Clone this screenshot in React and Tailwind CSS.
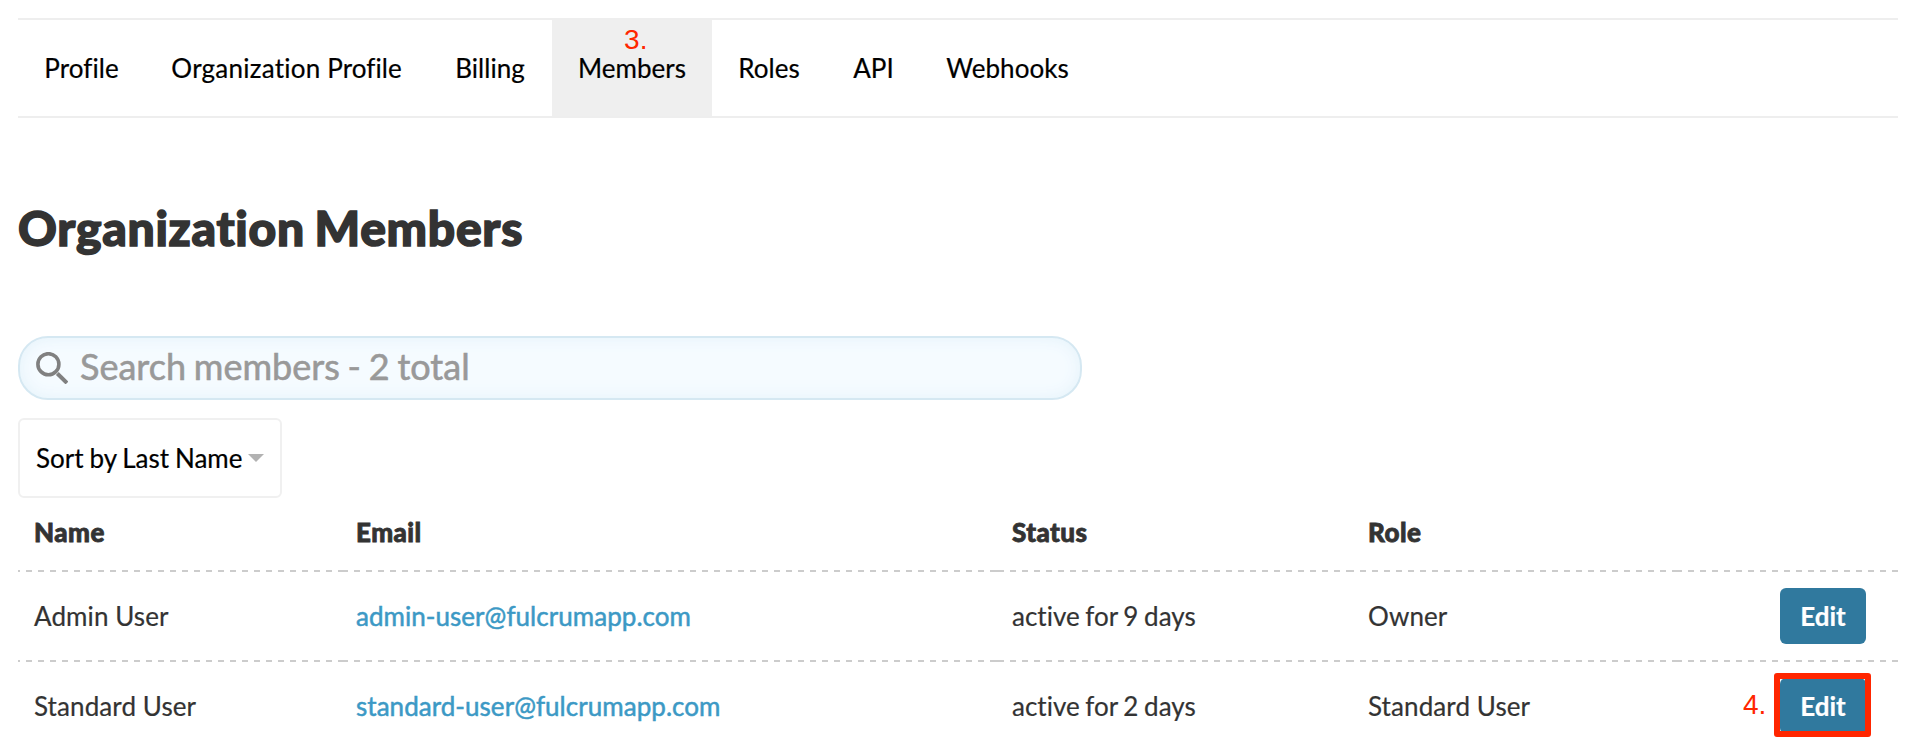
const tabs = [
  { label: "Profile", width: "w-[127px]" },
  { label: "Organization Profile", width: "w-[283px]" },
  { label: "Billing", width: "w-[124px]" },
  { label: "Members", width: "w-[160px]", active: true },
  { label: "Roles", width: "w-[114px]" },
  { label: "API", width: "w-[95px]" },
  { label: "Webhooks", width: "w-[173px]" },
];

const members = [
  { name: "Admin User", email: "admin-user@fulcrumapp.com", status: "active for 9 days", role: "Owner" },
  { name: "Standard User", email: "standard-user@fulcrumapp.com", status: "active for 2 days", role: "Standard User", step: "4." },
];

const COLS = "grid grid-cols-[322px_656px_356px_412px_86px]";
const DASH = "h-0.5 shrink-0 bg-[repeating-linear-gradient(90deg,#cccccc_0_6px,transparent_6px_12px)]";

function Rule() {
  return (
    <div className="flex h-0.5 overflow-hidden">
      <div className={`${DASH} -ml-1 w-[330px]`} />
      <div className={`${DASH} -ml-0.5 w-[654px]`} />
      <div className={`${DASH} w-[356px] border-l-2 border-[#cccccc]`} />
      <div className={`${DASH} -ml-1 w-[330px]`} />
      <div className={`${DASH} -ml-0.5 w-[222px]`} />
    </div>
  );
}

function EditButton({ step }) {
  return (
    <div className="relative">
      <button className="block h-14 w-[86px] rounded-md bg-[#30799e] text-[26px] leading-[56px] font-bold text-white">Edit</button>
      {step && (
        <>
          <span className="absolute -left-[37px] top-[11px] font-['Liberation_Sans',sans-serif] text-[28px] leading-8 text-[#ff2600] [-webkit-text-stroke:0px]">{step}</span>
          <div className="absolute -left-1.5 -top-[5px] h-16 w-[97px] rounded-[3px] border-[6px] border-[#ff2600]" />
        </>
      )}
    </div>
  );
}

function TabLabel({ label }) {
  const [first, second] = label.split(" ");
  if (!second) return label;
  return (
    <>
      <span className="tracking-[0.25px] [font-variant-ligatures:none]">{first}</span> {second}
    </>
  );
}

export default function App() {
  return (
    <div className="h-[756px] overflow-hidden bg-white px-[18px] pt-[18px] font-['Lato',sans-serif] text-[26px] text-[#333333] [-webkit-text-stroke:0.2px_currentColor]">
      <nav className="flex h-[100px] border-y-2 border-[#eeeeee] text-black">
        {tabs.map((t) => (
          <a
            key={t.label}
            className={`${t.width} relative whitespace-nowrap text-center leading-[97px] tracking-[0.06px] ${t.active ? "bg-[#efefef]" : ""}`}
          >
            <TabLabel label={t.label} />
            {t.active && (
              <span className="absolute left-[72px] top-[4px] font-['Liberation_Sans',sans-serif] text-[28px] leading-8 text-[#ff2600] [-webkit-text-stroke:0px]">3.</span>
            )}
          </a>
        ))}
      </nav>

      <h1 className="mt-[80px] text-[48px] leading-[60px] font-black tracking-[0.72px] [word-spacing:-2.5px] [font-variant-ligatures:none] [-webkit-text-stroke:1.5px_currentColor]">Organization Members</h1>

      <div className="mt-[78px] flex h-16 w-[1064px] items-center rounded-[30px] border-2 border-[#d5e8f2] bg-[#f5fbff] pl-4 shadow-[inset_0_0_16px_#e4f2fa]">
        <svg className="h-8 w-8" viewBox="0 0 32 32" fill="none" stroke="#808080">
          <circle cx="12.4" cy="12.2" r="10.5" strokeWidth="3.6" />
          <path d="M21.3 21.5 L31 31" strokeWidth="4" />
        </svg>
        <span className="ml-3 pb-1 text-[36px] leading-[44px] text-[#999999] [word-spacing:-1.4px] [-webkit-text-stroke:0.6px_currentColor]">Search members - 2 total</span>
      </div>

      <div className="mt-[18px] flex h-20 w-[264px] items-center rounded-md border-2 border-[#f0f0f0] pl-4 text-black">
        <span className="[word-spacing:-0.8px]">Sort by Last Name</span>
        <span className="ml-1.5 border-x-8 border-t-8 border-x-transparent border-t-[#b2b2b2]" />
      </div>

      <div className="[font-variant-ligatures:none]">
        <div className={`${COLS} h-[72px] pl-4 leading-[69px] font-black tracking-[0.45px] [-webkit-text-stroke:0.8px_currentColor]`}>
          <span>Name</span>
          <span>Email</span>
          <span>Status</span>
          <span>Role</span>
          <span />
        </div>
        {members.map((m) => (
          <div key={m.name}>
            <Rule />
            <div className={`${COLS} h-[88px] items-center pl-4`}>
              <span className="tracking-[0.1px]">{m.name}</span>
              <a className="tracking-[0.04px] text-[#3c99c5] [-webkit-text-stroke:0.5px_currentColor]">{m.email}</a>
              <span className="[word-spacing:-1px]">{m.status}</span>
              <span className="tracking-[0.1px]">{m.role}</span>
              <EditButton step={m.step} />
            </div>
          </div>
        ))}
      </div>
    </div>
  );
}
